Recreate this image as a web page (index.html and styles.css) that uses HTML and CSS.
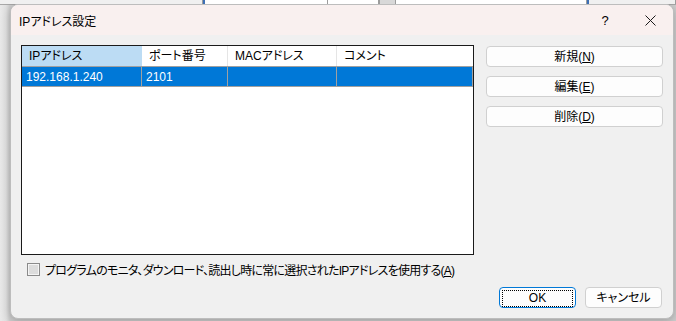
FILE: index.html
```html
<!DOCTYPE html>
<html lang="ja">
<head>
  <meta charset="UTF-8">
  <title>IPアドレス設定</title>
  <link rel="stylesheet" href="styles.css">
</head>
<body>
  <!-- 後ろのウィンドウの端 -->
  <div class="behind">
    <div class="bh-cell bh-gray" style="width:203px"></div>
    <div class="bh-cell bh-field bh-blue" style="width:125px"></div>
    <div class="bh-cell bh-field" style="width:51px"></div>
    <div class="bh-cell bh-drop" style="width:17px"></div>
    <div class="bh-cell bh-field" style="width:191px"></div>
    <div class="bh-cell bh-gray bh-blue" style="width:89px"></div>
  </div>

  <div class="dialog">
    <div class="titlebar">
      <span class="title">IPアドレス設定</span>
      <span class="help">?</span>
      <span class="close">
        <svg width="11" height="11" viewBox="0 0 11 11"><path d="M0.5 0.5L10.5 10.5M10.5 0.5L0.5 10.5" stroke="#1a1a1a" stroke-width="1"/></svg>
      </span>
    </div>

    <div class="content">
      <div class="main">
        <div class="list">
          <div class="list-row header">
            <div class="cell c1 sorted">IPアドレス</div>
            <div class="cell c2">ポート番号</div>
            <div class="cell c3">MACアドレス</div>
            <div class="cell c4">コメント</div>
          </div>
          <div class="list-row item selected">
            <div class="cell c1">192.168.1.240</div>
            <div class="cell c2">2101</div>
            <div class="cell c3"></div>
            <div class="cell c4"></div>
          </div>
        </div>

        <div class="side-buttons">
          <button class="btn">新規(<u>N</u>)</button>
          <button class="btn">編集(<u>E</u>)</button>
          <button class="btn">削除(<u>D</u>)</button>
        </div>
      </div>

      <label class="check-row">
        <span class="checkbox"></span>
        <span class="check-label">プログラムのモニタ、ダウンロード、読出し時に常に選択されたIPアドレスを使用する(<u>A</u>)</span>
      </label>

      <div class="footer">
        <button class="btn ok"><span class="focus">OK</span></button>
        <button class="btn cancel">キャンセル</button>
      </div>
    </div>
  </div>
</body>
</html>
```

FILE: styles.css
```css
html, body {
  margin: 0;
  padding: 0;
  width: 100%;
  height: 100%;
  overflow: hidden;
  background: linear-gradient(to right, #e9e9e9 0, #e2e2e2 6px, #cfcfcf 10px);
  font-family: "Liberation Sans", "Noto Sans CJK JP", sans-serif;
  font-size: 12px;
  color: #000;
  font-feature-settings: "palt";
}

.behind {
  display: flex;
  height: 4px;
  border-bottom: 1px solid #a8a8a8;
  background: #dedede;
}

.bh-cell {
  height: 4px;
  border-right: 1px solid #9c9c9c;
  box-sizing: border-box;
}

.bh-gray { background: #f0f0f0; }
.bh-field { background: #fff; }
.bh-blue { border-left: 2px solid #3d6fb5; }
.bh-drop { background: #d8d8d8; border-left: 1px solid #9c9c9c; }

.dialog {
  margin-left: 10px;
  width: 664px;
  height: 315px;
  box-sizing: border-box;
  border: 1px solid #bdbdbd;
  border-radius: 8px;
  background: #f0f0f0;
  overflow: hidden;
  box-shadow: 0 2px 10px rgba(0, 0, 0, 0.25);
  margin-top: -1px;
}

.titlebar {
  display: flex;
  align-items: center;
  height: 30px;
  background: #f9f0ef;
  padding-left: 8px;
}

.title {
  flex: 1;
  font-size: 12px;
}

.help {
  width: 14px;
  text-align: center;
  font-size: 13px;
  margin-right: 33px;
}

.close {
  display: flex;
  width: 11px;
  margin-right: 17px;
}

.content {
  padding: 10px 10px 0 10px;
}

.main {
  display: flex;
  gap: 12px;
}

.list {
  width: 453px;
  height: 210px;
  box-sizing: border-box;
  border: 1px solid #1a1a1a;
  background: #fff;
}

.list-row {
  display: flex;
}

.cell {
  box-sizing: border-box;
  white-space: nowrap;
  overflow: hidden;
}

.c1 { width: 120px; }
.c2 { width: 86px; }
.c3 { width: 109px; }
.c4 { flex: 1; }

.header .cell {
  height: 20px;
  line-height: 21px;
  padding-left: 7px;
  border-right: 1px solid #e5e5e5;
}

.header .c4 { border-right: none; }

.header .sorted {
  background: #bcdcf4;
  border-right-color: #bcdcf4;
}

.item .cell {
  height: 21px;
  line-height: 20px;
  padding-left: 4px;
  border-top: 1px solid #a0a0a0;
  border-bottom: 1px solid #a0a0a0;
  border-right: 1px solid #a0a0a0;
}

.selected .cell {
  background: #0078d7;
  color: #fff;
}

.side-buttons {
  display: flex;
  flex-direction: column;
  gap: 9px;
  padding-top: 1px;
}

.btn {
  font-family: inherit;
  font-size: 12px;
  font-feature-settings: "palt";
  color: #000;
  background: #fdfdfd;
  border: 1px solid #d0d0d0;
  border-radius: 4px;
  height: 21px;
  padding: 0;
  line-height: 18px;
}

.side-buttons .btn {
  width: 177px;
}

.check-row {
  display: flex;
  align-items: center;
  gap: 5px;
  margin: 7px 0 0 6px;
  height: 15px;
}

.check-label {
  letter-spacing: -0.75px;
}

.checkbox {
  width: 13px;
  height: 13px;
  box-sizing: border-box;
  border: 1px solid #8a8a8a;
  background: #dcdcdc;
  box-shadow: inset 0 0 0 1px #f4f4f4;
}

.footer {
  display: flex;
  justify-content: flex-end;
  gap: 9px;
  margin-top: 10px;
  padding-right: 1px;
}

.footer .btn {
  width: 77px;
}

.ok {
  border-color: #0078d7;
  padding: 2px;
}

.ok .focus {
  display: block;
  height: 15px;
  line-height: 15px;
  border: 1px dotted #000;
}
```
